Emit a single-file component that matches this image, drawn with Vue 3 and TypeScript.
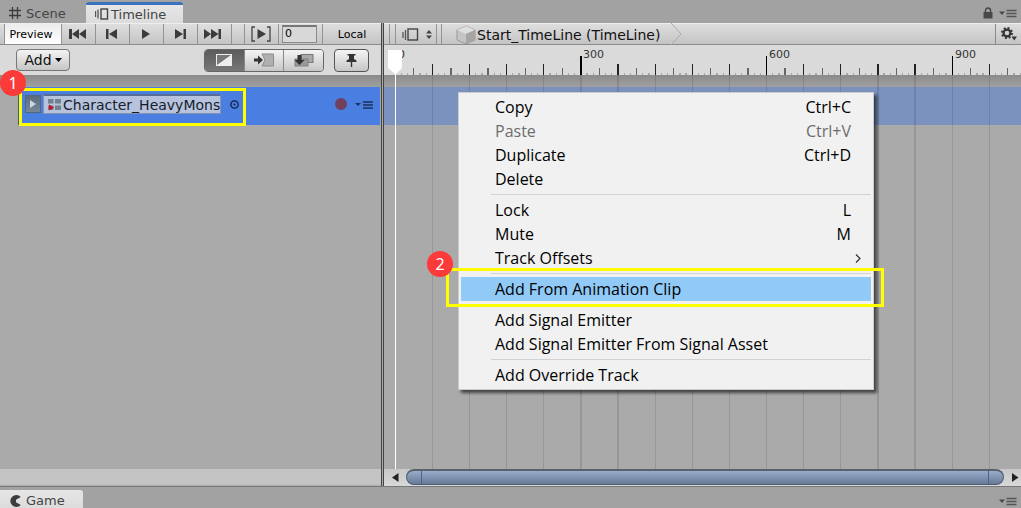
<script setup lang="ts">
import { ref } from 'vue'

interface Tick { x: number; w: number; h: number; color: string }
interface MenuEntry { label: string; keys?: string; disabled?: boolean; active?: boolean; sub?: boolean }

const origin = 11.15
const step = 37.125

const snap = (v: number) => ({ x: Math.floor(v), w: v % 1 > 0.75 ? 2 : 1 })

const ticks: Tick[] = []
for (let i = 0; i < 330; i++) {
  const { x, w } = snap(origin + (i * step) / 6)
  if (i % 30 === 0) ticks.push({ x, w, h: 19, color: '#000' })
  else if (i % 6 === 0) ticks.push({ x, w, h: 11, color: '#222' })
  else if (i % 3 === 0) ticks.push({ x, w, h: 7, color: '#666' })
  else ticks.push({ x, w, h: 2, color: '#a6a6a6' })
}
const gridLines = Array.from({ length: 55 }, (_, i) => snap(origin + i * step))
const labels = Array.from({ length: 4 }, (_, i) => ({ text: String(i * 300), x: Math.floor(origin + i * 5 * step) + 3 }))

const frame = ref('0')
const trackName = ref('Character_HeavyMons')

const groups: MenuEntry[][] = [
  [
    { label: 'Copy', keys: 'Ctrl+C' },
    { label: 'Paste', keys: 'Ctrl+V', disabled: true },
    { label: 'Duplicate', keys: 'Ctrl+D' },
    { label: 'Delete' },
  ],
  [
    { label: 'Lock', keys: 'L' },
    { label: 'Mute', keys: 'M' },
    { label: 'Track Offsets', sub: true },
  ],
  [{ label: 'Add From Animation Clip', active: true }],
  [{ label: 'Add Signal Emitter' }, { label: 'Add Signal Emitter From Signal Asset' }],
  [{ label: 'Add Override Track' }],
]
</script>

<template>
  <div class="editor">
    <header class="tabs">
      <button class="tab scene">
        <svg width="14" height="14" viewBox="0 0 14 14"><path d="M4.500 1v12M9.500 1v12M1 4.500h12M1 9.500h12" stroke="#3c3c3c" stroke-width="1.300" /></svg>
        Scene
      </button>
      <button class="tab current">
        <svg width="14" height="12" viewBox="0 0 14 12"><path d="M.5 3v6M3 1.500v9" stroke="#555" stroke-width="1.300" /><rect x="6" y="1" width="6.500" height="10" fill="none" stroke="#444" stroke-width="1.400" /></svg>
        Timeline
      </button>
      <span class="grow"></span>
      <button class="plain lock" aria-label="Lock">
        <svg width="10" height="12" viewBox="0 0 10 12"><path d="M2.500 6V3.500a2.500 2.500 0 0 1 5 0V6" fill="none" stroke="#484848" stroke-width="1.500" /><rect x=".5" y="5" width="9" height="6.500" fill="#484848" /></svg>
      </button>
      <button class="plain" aria-label="Window options">
        <svg width="18" height="9" viewBox="0 0 18 9"><path d="M0 2.500h6L3 6z" fill="#484848" /><path d="M7.500 1.500h10M7.500 4.500h10M7.500 7.500h10" stroke="#555" stroke-width="1.500" /></svg>
      </button>
    </header>

    <main class="panes">
      <section class="left">
        <div class="bar">
          <button class="cell preview">Preview</button>
          <button class="cell step" aria-label="First frame">
            <svg width="18" height="12" viewBox="0 0 18 12"><path d="M0 1h3v10H0zM10 1v10L3 6zM17 1v10l-7-5z" fill="#3c3c3c" /></svg>
          </button>
          <button class="cell step" aria-label="Previous frame">
            <svg width="12" height="12" viewBox="0 0 12 12"><path d="M0 1h2.500v10H0zM11 1v10L3 6z" fill="#3c3c3c" /></svg>
          </button>
          <button class="cell step" aria-label="Play">
            <svg width="10" height="12" viewBox="0 0 10 12"><path d="M1 1l8 5-8 5z" fill="#3c3c3c" /></svg>
          </button>
          <button class="cell step" aria-label="Next frame">
            <svg width="12" height="12" viewBox="0 0 12 12"><path d="M9.500 1H12v10H9.500zM1 1v10l8-5z" fill="#3c3c3c" /></svg>
          </button>
          <button class="cell last" aria-label="Last frame">
            <svg width="18" height="12" viewBox="0 0 18 12"><path d="M14.500 1h2.500v10h-2.500zM0 1v10l7-5zM7 1v10l7.500-5z" fill="#3c3c3c" /></svg>
          </button>
          <span class="cell spacer"></span>
          <button class="cell step" aria-label="Play range">
            <svg width="20" height="16" viewBox="0 0 20 16"><path d="M4 1H1v14h3M16 1h3v14h-3" fill="none" stroke="#444" stroke-width="1.300" /><path d="M6.500 3l8.500 5-8.500 5z" fill="#3c3c3c" /></svg>
          </button>
          <span class="cell frame"><input v-model="frame" aria-label="Current frame" /></span>
          <button class="cell local">Local</button>
        </div>
        <div class="options">
          <button class="btn add">Add<svg width="7" height="4" viewBox="0 0 7 4"><path d="M0 0h7L3.500 4z" fill="#000" /></svg></button>
          <div class="modes">
            <button class="mode on" aria-label="Mix mode">
              <svg width="16" height="12" viewBox="0 0 16 12"><rect x=".5" y=".5" width="15" height="11" fill="#777" stroke="#eee" /><path d="M15 1v10H1z" fill="#eee" /></svg>
            </button>
            <button class="mode" aria-label="Ripple mode">
              <svg width="20" height="14" viewBox="0 0 20 14"><path d="M8 1h11.500v12H8l3-6z" fill="#b0b0b0" stroke="#8c8c8c" /><path d="M0 5.500h4V2.500L9 7l-5 4.500v-3H0z" fill="#333" /></svg>
            </button>
            <button class="mode" aria-label="Replace mode">
              <svg width="20" height="14" viewBox="0 0 20 14"><rect x="7" y="1.500" width="12" height="8" fill="#aaa" stroke="#777" /><rect x="1" y="6" width="13" height="7" fill="#999" stroke="#808080" /><path d="M3.500 2h4v5h3L5.500 12 .5 7h3z" fill="#333" /></svg>
            </button>
          </div>
          <button class="btn pin" aria-label="Markers">
            <svg width="11" height="15" viewBox="0 0 11 15"><path d="M1.500 1h8v1.500H8V6l2.500 1.500V9h-10V7.500L3 6V2.500H1.500zM4.800 9h1.400v5H4.800z" fill="#333" /></svg>
          </button>
        </div>
        <div class="strip"></div>
        <div class="track">
          <button class="fold" aria-label="Expand"><svg width="8" height="8" viewBox="0 0 8 8"><path d="M1 0l6 4-6 4z" fill="#d0d6dc" /></svg></button>
          <label class="binding">
            <svg width="13" height="13" viewBox="0 0 13 13"><path d="M0 1h5.500v4.500H0zM7 1h6v4.500H7zM7 7.500h6V12H7zM0 7.500h5.500V12H0z" fill="#6f8390" /><path d="M1 6.500l5 3-5 3z" fill="#d01020" /></svg>
            <input v-model="trackName" aria-label="Track binding" />
          </label>
          <button class="plain pick" aria-label="Pick object"><svg width="9" height="9" viewBox="0 0 9 9"><circle cx="4.500" cy="4.500" r="3.700" fill="none" stroke="#102040" stroke-width="1.300" /><circle cx="4.500" cy="4.500" r="1" fill="#102040" /></svg></button>
          <span class="grow"></span>
          <button class="plain record" aria-label="Record"><svg width="12" height="12" viewBox="0 0 12 12"><circle cx="6" cy="6" r="6" fill="#71405f" /></svg></button>
          <button class="plain" aria-label="Track options"><svg width="18" height="9" viewBox="0 0 18 9"><path d="M0 3h6L3 6z" fill="#1d3258" /><path d="M8 2h10M8 5h10M8 8h10" stroke="#1d3258" stroke-width="1.700" /></svg></button>
        </div>
        <div class="grow"></div>
        <div class="left-foot"></div>
      </section>

      <div class="splitter"></div>

      <section class="right">
        <div class="bar">
          <span class="cell gap"></span><span class="cell gap"></span>
          <button class="cell selector" aria-label="Timeline selector">
            <svg width="17" height="13" viewBox="0 0 17 13"><path d="M1 4v6M3.500 2v10" stroke="#555" stroke-width="1.300" /><rect x="6" y="1" width="9.500" height="11" fill="none" stroke="#444" stroke-width="1.400" /></svg>
            <svg width="6" height="9" viewBox="0 0 6 9"><path d="M0 3.500h6L3 0zM0 5.500h6L3 9z" fill="#444" /></svg>
          </button>
          <span class="cell gap thin"></span>
          <a class="crumb" href="#">
            <svg width="20" height="20" viewBox="0 0 20 20"><path d="M10 1l9 4v10l-9 4-9-4V5z" fill="#c4c4c4" stroke="#999" /><path d="M10 1l9 4-9 4-9-4z" fill="#dedede" /><path d="M10 9v10l9-4V5z" fill="#a5a5a5" /></svg>
            Start_TimeLine (TimeLine)
          </a>
          <svg class="chevron" width="12" height="22" viewBox="0 0 12 22"><path d="M1 0l10 11L1 22" fill="none" stroke="#aaa" /></svg>
          <span class="grow"></span>
          <button class="cell gear" aria-label="Settings">
            <svg width="16" height="14" viewBox="0 0 16 14"><circle cx="6" cy="6" r="3.400" fill="none" stroke="#333" stroke-width="2.200" /><circle cx="6" cy="6" r="5" fill="none" stroke="#333" stroke-width="2" stroke-dasharray="1.960 1.960" /><path d="M10.500 9.500H16L13.200 13.500z" fill="#333" /></svg>
          </button>
        </div>
        <div class="canvas">
          <svg class="ruler" height="30">
            <rect v-for="(t, i) in ticks" :key="i" :x="t.x" :y="30 - t.h" :width="t.w" :height="t.h" :fill="t.color" />
            <text v-for="l in labels" :key="l.text" :x="l.x" y="13">{{ l.text }}</text>
          </svg>
          <div class="lanes">
            <div class="strip"></div>
            <div class="lane"></div>
            <svg class="grid">
              <rect v-for="(g, i) in gridLines" :key="i" :x="g.x" y="0" :width="g.w" height="100%" fill="#000" fill-opacity=".11" />
            </svg>
          </div>
          <div class="playhead">
            <svg width="14" height="25" viewBox="0 0 14 25"><path d="M0 0h14v18l-6 6H7L0 18z" fill="#fff" /></svg>
          </div>
        </div>
        <div class="scroll">
          <button class="plain arrow" aria-label="Scroll left"><svg width="7" height="9" viewBox="0 0 7 9"><path d="M6.500 0v9L0 4.500z" fill="#222" /></svg></button>
          <div class="thumb"><i></i><i></i></div>
          <button class="plain arrow" aria-label="Scroll right"><svg width="7" height="9" viewBox="0 0 7 9"><path d="M0 0v9l6.500-4.500z" fill="#222" /></svg></button>
        </div>
      </section>
    </main>

    <footer class="tabs bottom">
      <button class="tab game">
        <svg width="12" height="12" viewBox="0 0 12 12"><path d="M10.800 2A6 6 0 1 0 10.800 10L6 7.200V4.800z" fill="#3c3c3c" /></svg>
        Game
      </button>
      <span class="grow"></span>
      <button class="plain" aria-label="Window options">
        <svg width="18" height="9" viewBox="0 0 18 9"><path d="M0 2.500h6L3 6z" fill="#484848" /><path d="M7.500 1.500h10M7.500 4.500h10M7.500 7.500h10" stroke="#555" stroke-width="1.500" /></svg>
      </button>
    </footer>

    <div class="menu" role="menu">
      <div v-for="(group, gi) in groups" :key="gi" class="group" role="group">
        <button v-for="item in group" :key="item.label" class="item" :class="{ active: item.active }" :disabled="item.disabled" role="menuitem">
          <span>{{ item.label }}</span>
          <span v-if="item.keys" class="keys">{{ item.keys }}</span>
          <svg v-if="item.sub" class="more" width="6" height="9" viewBox="0 0 6 9"><path d="M1 .5l4 4-4 4" fill="none" stroke="#333" stroke-width="1.200" /></svg>
        </button>
      </div>
    </div>

    <div class="outline first"></div>
    <div class="outline second"></div>
    <span class="badge one">1</span>
    <span class="badge two">2</span>
  </div>
</template>

<style>
body { margin: 0; }
</style>

<style scoped>
.editor { position: relative; display: flex; flex-direction: column; min-height: 100vh; overflow: hidden; background: #a2a2a2; font-family: "DejaVu Sans", sans-serif; font-size: 14px; color: #000; }
.editor * { box-sizing: border-box; }
button, input { font: inherit; color: inherit; margin: 0; padding: 0; border: 0; background: none; border-radius: 0; }
svg { display: block; flex: none; }
.grow { flex: 1; }
.plain { display: flex; align-items: center; }

.tabs { display: flex; align-items: center; height: 23px; padding-right: 4px; background: #a2a2a2; }
.tab { display: flex; align-items: center; gap: 4px; color: #444; font-size: 13px; }
.scene { width: 86px; padding: 3px 0 0 8px; }
.current { align-self: flex-end; width: 97px; height: 21px; padding-left: 9px; border-top: 3px solid #3a72be; border-radius: 3px 3px 0 0; background: linear-gradient(#e6e6e6, #dcdcdc); gap: 2px; }
.lock { margin: 3px 6px 0 0; }
.lock + .plain { margin-top: 4px; }

.panes { flex: 1; display: flex; min-height: 463px; border-bottom: 1px solid #777; }
.left { display: flex; flex-direction: column; width: 381px; background: #aaa; }
.splitter { width: 3px; border: solid #444; border-width: 0 1px; background: #aaa; }
.right { flex: 1; min-width: 0; display: flex; flex-direction: column; background: #aaa; }

.bar { display: flex; height: 22px; border-top: 1px solid #eee; border-bottom: 1px solid #8b8b8b; background: linear-gradient(#dedede, #c4c4c4); }
.cell { display: flex; align-items: center; justify-content: center; border-right: 1px solid #949494; font-size: 11px; }
.preview { width: 58px; margin-left: 4px; padding-right: 4px; border-left: 1px solid #949494; background: linear-gradient(#ececec, #fff); }
.step { width: 34px; padding-right: 2px; }
.last { width: 34px; padding-right: 4px; }
.spacer { width: 13px; }
.frame { width: 44px; padding-right: 2px; }
.frame input { width: 35px; height: 18px; padding: 0 0 2px 2px; border: 1px solid #8a8a8a; border-top: 2px solid #777; background: #d8d8d8; }
.local { flex: 1; border-right: 0; }

.options { display: flex; align-items: center; height: 30px; padding: 0 12px 0 16px; background: #dadada; }
.btn { display: flex; align-items: center; justify-content: center; height: 22px; border: 1px solid #777; border-radius: 4px; background: linear-gradient(#f4f4f4, #c6c6c6); }
.add { width: 54px; gap: 3px; color: #111; }
.modes { display: flex; width: 120px; height: 23px; margin-left: auto; border: 1px solid #666; border-radius: 4px; overflow: hidden; }
.mode { flex: 1; display: flex; align-items: center; justify-content: center; background: linear-gradient(#f4f4f4, #c6c6c6); }
.mode + .mode { border-left: 1px solid #888; }
.mode.on { background: linear-gradient(#5c5c5c, #777); }
.pin { width: 35px; height: 23px; margin-left: 10px; border-color: #555; }
.strip { height: 12px; background: linear-gradient(#8b8b8b, #a0a0a0); }

.track { display: flex; align-items: center; height: 38px; margin: 0 1px 0 18px; padding: 0 7px 4px 6px; background: #4a7ee0; border-left: 1px solid #2d5eaa; }
.fold { display: flex; align-items: center; justify-content: center; width: 16px; height: 18px; border: 1px solid #50687e; background: linear-gradient(#5a6b80, #75889b); }
.binding { display: flex; align-items: center; gap: 2px; width: 178px; height: 20px; margin-left: 2px; padding-left: 4px; border: 1px solid #8494b4; border-top: 2px solid #556c98; background: #b7c3dc; }
.binding input { flex: 1; min-width: 0; height: 17px; font-size: 14px; color: #151d2c; }
.pick { margin-left: 9px; }
.record { margin-right: 8px; }
.left-foot { height: 17px; background: linear-gradient(#c4c4c4 88%, #aaa); }

.gap { width: 6px; }
.thin { width: 5px; }
.selector { width: 41px; gap: 7px; padding-left: 1px; }
.crumb { display: flex; align-items: center; gap: 1px; margin-left: 14px; padding-top: 2px; color: #111; font-size: 14px; text-decoration: none; white-space: nowrap; }
.chevron { margin-left: 10px; margin-top: -1px; }
.gear { width: 26px; border-right: 0; border-left: 1px solid #8b8b8b; }

.canvas { position: relative; flex: 1; display: flex; flex-direction: column; }
.ruler { width: 100%; background: #dadada; font-size: 11px; fill: #333; }
.lanes { position: relative; flex: 1; overflow: hidden; }
.lane { height: 38px; background: #7b92be; }
.grid { position: absolute; inset: 0; width: 100%; height: 100%; }
.playhead { position: absolute; top: 5px; bottom: 0; left: 4px; width: 14px; background: linear-gradient(#fff, #fff) 7px 0 / 1px 100% no-repeat; }

.scroll { display: flex; height: 17px; background: linear-gradient(#c8c8c8, #d8d8d8); }
.arrow { width: 22px; justify-content: center; }
.arrow:last-child { width: 17px; padding-left: 6px; }
.thumb { flex: 1; display: flex; justify-content: space-between; margin-bottom: 1px; padding: 0 14px; border: 1px solid #4c5c74; border-top: 2px solid #59616d; border-radius: 8px; background: linear-gradient(#99acca, #667995); }
.thumb i { width: 1px; background: #4c6287; }

.bottom { height: 21px; }
.game { align-self: flex-end; width: 83px; height: 18px; padding: 3px 0 0 10px; background: linear-gradient(#e6e6e6, #dcdcdc); border-radius: 0 3px 0 0; }
.bottom .plain { margin-top: 7px; }

.menu { position: absolute; left: 458px; top: 92px; width: 416px; padding: 2px; border: 1px solid #ccc; background: #f1f1f1; box-shadow: 3px 3px 3px rgba(0, 0, 0, .6); font-family: "Open Sans", sans-serif; font-size: 16px; }
.group + .group::before { content: ""; display: block; height: 1px; margin: 3px 0 3px 30px; background: #d2d2d2; }
.item { display: flex; align-items: center; width: 100%; height: 24px; padding: 0 20px 0 34px; line-height: 24px; }
.item:disabled { color: #6d6d6d; }
.item.active { background: #91c9f7; }
.keys { margin-left: auto; }
.more { margin: 0 -10px 0 auto; }

.outline { position: absolute; border: 3px solid #ff0; pointer-events: none; }
.first { left: 19px; top: 88px; width: 227px; height: 38px; }
.second { left: 446px; top: 268px; width: 438px; height: 39px; }
.badge { position: absolute; width: 26px; height: 26px; border-radius: 50%; background: #fb3a3a; color: #fff; font: 16px/26px "Noto Sans", sans-serif; text-align: center; }
.one { left: 0; top: 70px; }
.two { left: 427px; top: 251px; }
</style>
